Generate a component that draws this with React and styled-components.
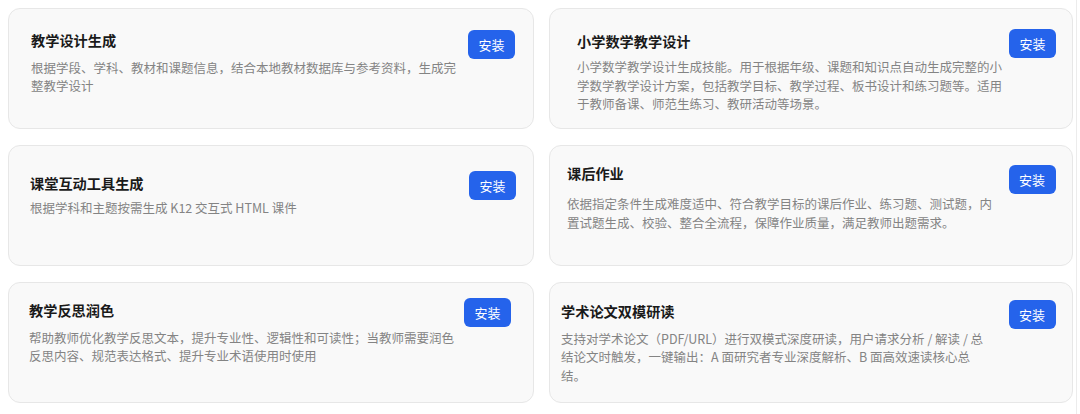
import React from "react";
import styled, { createGlobalStyle } from "styled-components";

const GlobalStyle = createGlobalStyle`
  html, body {
    margin: 0;
    padding: 0;
    background: #ffffff;
  }
  body {
    font-family: "Noto Sans CJK SC", "Noto Sans", sans-serif;
    -webkit-font-smoothing: antialiased;
  }
`;

// offsets differ a little from card to card, so each one carries its own spacing
const skills = [
  {
    title: "教学设计生成",
    desc: "根据学段、学科、教材和课题信息，结合本地教材数据库与参考资料，生成完整教学设计",
    space: { pt: 21, pl: 22, pr: 18, title: 0, btn: 0, gap: 8.5 },
  },
  {
    title: "小学数学教学设计",
    desc: "小学数学教学设计生成技能。用于根据年级、课题和知识点自动生成完整的小学数学教学设计方案，包括教学目标、教学过程、板书设计和练习题等。适用于教师备课、师范生练习、教研活动等场景。",
    space: { pt: 20, pl: 27, pr: 16, title: 1.7, btn: 0, gap: 7.5 },
  },
  {
    title: "课堂互动工具生成",
    desc: "根据学科和主题按需生成 K12 交互式 HTML 课件",
    space: { pt: 24.5, pl: 21, pr: 17, title: 2.1, btn: 0, gap: 6.6 },
  },
  {
    title: "课后作业",
    desc: "依据指定条件生成难度适中、符合教学目标的课后作业、练习题、测试题，内置试题生成、校验、整合全流程，保障作业质量，满足教师出题需求。",
    space: { pt: 17, pl: 17, pr: 16.5, title: 0, btn: 1.7, gap: 12 },
  },
  {
    title: "教学反思润色",
    desc: "帮助教师优化教学反思文本，提升专业性、逻辑性和可读性；当教师需要润色反思内容、规范表达格式、提升专业术语使用时使用",
    space: { pt: 15, pl: 20, pr: 22, title: 2, btn: 0, gap: 8.6 },
  },
  {
    title: "学术论文双模研读",
    desc: "支持对学术论文（PDF/URL）进行双模式深度研读，用户请求分析 / 解读 / 总结论文时触发，一键输出：A 面研究者专业深度解析、B 面高效速读核心总结。",
    space: { pt: 17, pl: 11, pr: 16.5, title: 1, btn: 0, gap: 8.6 },
    descWidth: 428,
  },
];

function App() {
  return (
    <Page>
      <GlobalStyle />
      <Grid>
        {skills.map((skill) => (
          <Card key={skill.title} $space={skill.space}>
            <Body>
              <Title $shift={skill.space.title}>{skill.title}</Title>
              <Desc $gap={skill.space.gap} $width={skill.descWidth}>
                {skill.desc}
              </Desc>
            </Body>
            <InstallButton $shift={skill.space.btn}>安装</InstallButton>
          </Card>
        ))}
      </Grid>
    </Page>
  );
}

const Page = styled.div`
  width: 1077px;
  height: 414px;
  box-sizing: border-box;
  padding: 8px 0 0 8px;
  border-right: 1px solid #ececec;
`;

const Grid = styled.div`
  display: grid;
  grid-template-columns: 526px 524px;
  grid-auto-rows: 121px;
  column-gap: 15px;
  row-gap: 16px;
`;

const Card = styled.div`
  box-sizing: border-box;
  display: flex;
  align-items: flex-start;
  gap: 6px;
  padding: ${({ $space }) => `${$space.pt}px ${$space.pr}px 0 ${$space.pl}px`};
  background: #f9f9f9;
  border: 1px solid #e7e7e7;
  border-radius: 12px;
`;

const Body = styled.div`
  flex: 1;
  min-width: 0;
`;

const Title = styled.div`
  margin-top: ${(props) => props.$shift}px;
  font-size: 14.2px;
  line-height: 20px;
  font-weight: 700;
  color: #1a1a1a;
`;

const Desc = styled.div`
  margin-top: ${(props) => props.$gap}px;
  max-width: ${(props) => (props.$width ? `${props.$width}px` : "none")};
  font-size: 12.5px;
  line-height: 18.5px;
  color: #848484;
`;

const InstallButton = styled.button`
  flex: none;
  margin-top: ${(props) => props.$shift}px;
  width: 47px;
  height: 29px;
  padding: 0;
  border: none;
  border-radius: 6px;
  background: #2563eb;
  color: #ffffff;
  font-family: inherit;
  font-size: 13px;
  cursor: pointer;
`;

export default App;
